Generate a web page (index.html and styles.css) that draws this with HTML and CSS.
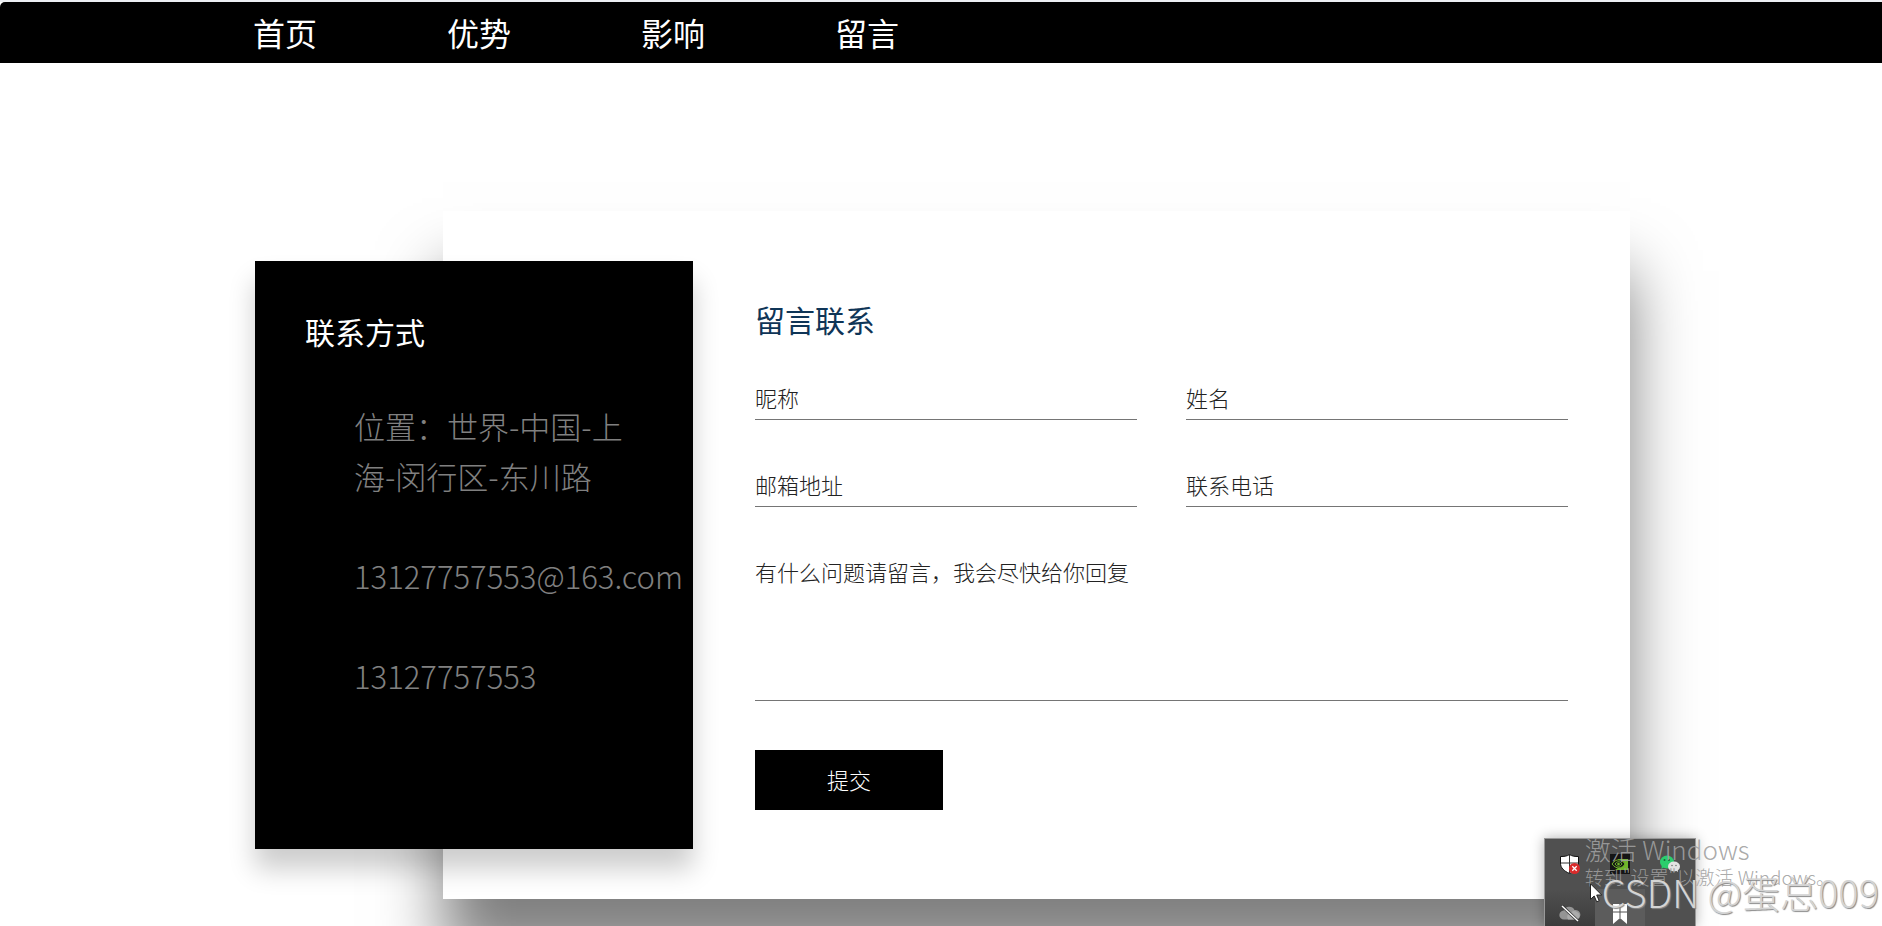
FILE: index.html
```html
<!DOCTYPE html>
<html lang="zh-CN">
<head>
  <meta charset="UTF-8">
  <meta name="viewport" content="width=device-width,initial-scale=1">
  <title>留言</title>
  <link rel="stylesheet" href="styles.css">
</head>
<body>

  <header>
    <nav>
      <a href="#">首页</a>
      <a href="#">优势</a>
      <a href="#">影响</a>
      <a href="#">留言</a>
    </nav>
  </header>

  <main class="contact">
    <section class="info">
      <h2>联系方式</h2>
      <ul>
        <li>位置：世界-中国-上海-闵行区-东川路</li>
        <li>13127757553@163.com</li>
        <li>13127757553</li>
      </ul>
    </section>

    <form class="message">
      <h2>留言联系</h2>
      <div class="fields">
        <input type="text" placeholder="昵称" aria-label="昵称">
        <input type="text" placeholder="姓名" aria-label="姓名">
        <input type="email" placeholder="邮箱地址" aria-label="邮箱地址">
        <input type="tel" placeholder="联系电话" aria-label="联系电话">
        <textarea placeholder="有什么问题请留言，我会尽快给你回复" aria-label="留言内容"></textarea>
      </div>
      <button type="submit">提交</button>
    </form>
  </main>

  <!-- system tray -->
  <aside class="tray">
    <div class="cell">
      <svg width="20" height="20" viewBox="0 0 20 20">
        <path d="M9.500 .5C12 2.300 15 2.500 18.500 2.500V9c0 5-3.500 8-9 10.500C4 17 .5 14 .5 9V2.500C4 2.500 7 2.300 9.500 .5z" fill="#fff" stroke="#111"/>
        <path d="M9.500 1v18M1 9h17" stroke="#333"/>
        <circle cx="14.500" cy="14.500" r="5.500" fill="#d92b2b"/>
        <path d="M12.300 12.300l4.400 4.400M16.700 12.300l-4.400 4.400" stroke="#fff" stroke-width="1.300"/>
      </svg>
    </div>
    <div class="cell">
      <svg width="20" height="20" viewBox="0 0 20 20">
        <path d="M0 0h20v20H0z" fill="#151515"/>
        <path d="M8 5h10v11H5l3-2z" fill="#70b52b"/>
        <path d="M2 10c4-6 10-5 13 0-3 5-9 5.500-13 0z" fill="#151515" stroke="#70b52b"/>
        <path d="M5 10c2-3 5-3 7 0-2 3-5 3-7 0z" fill="none" stroke="#70b52b"/>
        <circle cx="8.500" cy="10" r="1.300" fill="#70b52b"/>
      </svg>
    </div>
    <div class="cell">
      <svg width="20" height="20" viewBox="0 0 20 20">
        <path d="M1.500 15l.3-3.500h5l-3.300 2z" fill="#2bce6c"/>
        <ellipse cx="7" cy="8" rx="7" ry="6.500" fill="#2bce6c"/>
        <circle cx="4.500" cy="6" r="1" fill="#17663a"/>
        <circle cx="9" cy="6" r="1" fill="#17663a"/>
        <path d="M15 16l3 2-.4-3z" fill="#e3e3e3"/>
        <ellipse cx="14" cy="12.500" rx="6" ry="5" fill="#e3e3e3"/>
        <circle cx="12" cy="11.500" r=".8" fill="#777"/>
        <circle cx="16" cy="11.500" r=".8" fill="#777"/>
      </svg>
    </div>
    <div class="cell dark">
      <svg width="22" height="18" viewBox="0 0 22 18">
        <path d="M5 14.500a4.500 4.500 0 0 1-.3-9A6 6 0 0 1 15.500 5a4.800 4.800 0 0 1 2 9.500z" fill="#949494"/>
        <path d="M9 14.500a4 4 0 0 1 3-6.500 4 4 0 0 1 6-1 4 4 0 0 1 0 7.500z" fill="#ababab"/>
        <path d="M3 1l16 15" stroke="#333" stroke-width="3"/>
        <path d="M3 1l16 15" stroke="#fff" stroke-width="1.400"/>
      </svg>
    </div>
    <div class="cell light">
      <svg width="14" height="20" viewBox="0 0 14 20">
        <path d="M0 0h14v20l-7-6-7 6z" fill="#fff"/>
        <path d="M7 0v14M0 8h14" stroke="#505050"/>
      </svg>
    </div>
    <div class="cell"></div>
  </aside>

  <div class="activate">
    <p class="activate-title">激活 Windows</p>
    <p>转到"设置"以激活 Windows。</p>
  </div>

  <div class="watermark">CSDN @蛋总009</div>

  <svg class="cursor" width="13" height="20" viewBox="0 0 13 20">
    <path d="M.5 .8v15.500l3.700-3.300 2.500 5.800 2.500-1.100-2.500-5.700h5z" fill="#fff" stroke="#222"/>
  </svg>

</body>
</html>
```
FILE: styles.css
```css
:root {
  --text-light: #808080;
  --line: #757575;
  --left: 255px;
  --right: 252px;
}
*, *::before, *::after { box-sizing: border-box; }
body {
  position: relative;
  margin: 0;
  min-height: 100vh;
  overflow: hidden;
  border-top: 2px solid #eceff3;
  background: #fff;
  font-family: "Noto Sans CJK SC", sans-serif;
  font-weight: 300;
}
header {
  padding: 0 var(--right) 0 253px;
  border-top-left-radius: 5px;
  background: #000;
}
nav {
  display: flex;
  gap: 130px;
}
nav a {
  color: #fff;
  font-size: 32px;
  font-weight: 400;
  line-height: 61px;
  text-decoration: none;
}

/* black card overlaps the white one */
.contact {
  display: grid;
  grid-template-columns: 188px 250px 1fr;
  margin: 148px var(--right) 0 var(--left);
}
.contact h2 {
  margin: 0;
  font-size: 30px;
  font-weight: 400;
  line-height: 40px;
}
.info {
  grid-area: 1 / 1 / 2 / 3;
  z-index: 1;
  margin: 50px 0;
  padding: 50px 0 50px 50px;
  background: #000;
  color: #fff;
  box-shadow: 0 20px 25px rgba(0,0,0,.2);
}
.info ul {
  margin: 50px 50px 0 0;
  padding-left: 49px;
  list-style: none;
  color: var(--text-light);
  font-size: 31px;
  line-height: 50px;
}
.info li { margin-bottom: 50px; }

.message {
  grid-area: 1 / 2 / 2 / 4;
  padding: 88px 62px 89px 312px;
  background: #fff;
  box-shadow: 0 60px 60px rgba(0,0,0,.5);
}
.message h2 { color: #0f3557; }
.fields {
  display: grid;
  grid-template-columns: 1fr 1fr;
  gap: 50px 49px;
  margin: 44px 0 49px;
}
.fields input,
.fields textarea {
  display: block;
  width: 100%;
  height: 37px;
  padding: 0 0 8px;
  border: none;
  border-bottom: 1px solid var(--line);
  outline: none;
  background: none;
  color: #222;
  font: inherit;
  font-size: 22px;
  line-height: 28px;
}
.fields textarea {
  grid-column: 1 / 3;
  height: 144px;
  resize: none;
}
.fields ::placeholder { color: #222; opacity: 1; }
.message button {
  display: block;
  width: 188px;
  height: 60px;
  padding: 0 0 2px;
  border: none;
  background: #000;
  color: #fff;
  font: inherit;
  font-size: 22px;
  cursor: pointer;
}

.tray {
  position: absolute;
  right: 186px;
  bottom: 0;
  z-index: 2;
  display: grid;
  grid-template-columns: repeat(3, 1fr);
  grid-template-rows: 50px 37px;
  width: 152px;
  border: 1px solid #999;
  border-bottom: none;
  background: #505050;
  box-shadow: 0 0 12px rgba(0,0,0,.3);
}
.cell {
  display: flex;
  align-items: center;
  justify-content: center;
}
.cell.dark { background: linear-gradient(#505050, #3c3c3c); padding-top: 12px; }
.cell.light { background: #5c5c5c; padding-top: 12px; }

.activate {
  position: absolute;
  right: 47px;
  bottom: 37px;
  z-index: 3;
  color: rgba(160,160,160,.9);
  font-size: 19px;
  line-height: 24px;
  white-space: nowrap;
}
.activate p { margin: 0; }
.activate .activate-title { font-size: 26px; line-height: 32px; }

.watermark {
  position: absolute;
  right: 3px;
  bottom: 12px;
  z-index: 4;
  color: #d4d4d4;
  font-size: 38px;
  line-height: 44px;
  text-shadow: 1px 1px 1px #888;
  white-space: nowrap;
}
.cursor {
  position: absolute;
  right: 279px;
  bottom: 23px;
  z-index: 5;
}
```
